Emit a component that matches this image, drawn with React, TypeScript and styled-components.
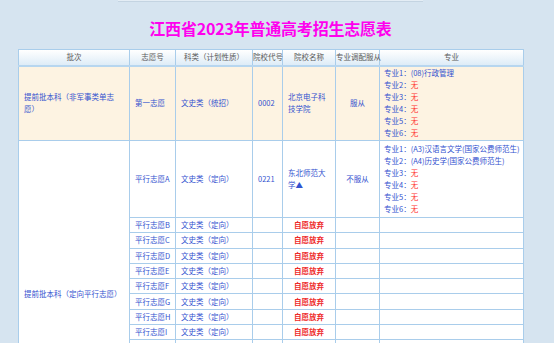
import React from 'react'
import styled, { createGlobalStyle } from 'styled-components'

const Global = createGlobalStyle`
  html, body {
    margin: 0;
    padding: 0;
    background: #d6e4f0;
    font-family: "Noto Sans CJK SC", "Noto Sans", sans-serif;
  }
`

const Page = styled.div`
  padding-left: 18px;
  width: 505px;
`

const TopStrip = styled.div`
  margin-left: 118px;
  width: 305px;
  height: 1px;
  background: #e4edf5;
  border-bottom: 1px solid #c4d4e2;
`

const Title = styled.h1`
  margin: 0;
  height: 47px;
  line-height: 52px;
  text-align: center;
  font-size: 16px;
  font-weight: 700;
  color: #ff00ee;
  letter-spacing: -0.2px;
`

const Table = styled.table`
  width: 505px;
  border-collapse: collapse;
  table-layout: fixed;
  border: 1px solid #9fc4e2;
  font-size: 7.5px;
  line-height: 12px;
`

const HeadRow = styled.tr`
  height: 16px;
  background: linear-gradient(#ffffff, #dcebf7);
`

const HeadCell = styled.th`
  padding: 0;
  font-weight: 400;
  color: #5a5a5a;
  white-space: nowrap;
  overflow: visible;
  border: 1px solid #a9cdeb;
  border-bottom: 2px solid #b7d6ef;
`

const Row = styled.tr<{ $bg?: string; $h: number }>`
  height: ${p => p.$h}px;
  background: ${p => p.$bg ?? '#ffffff'};
`

const Cell = styled.td<{ $align?: 'left' | 'center'; $wrap?: boolean }>`
  padding: 0 5px;
  border: 1px solid #a9cdeb;
  color: #3352cf;
  text-align: ${p => p.$align ?? 'left'};
  vertical-align: middle;
  white-space: ${p => (p.$wrap ? 'normal' : 'nowrap')};
  overflow: hidden;
`

const MajorCell = styled(Cell)`
  padding-left: 4px;
`

const Line = styled.div`
  white-space: nowrap;
`

const None = styled.span`
  color: #ff3030;
`

const Quit = styled.span`
  color: #ee2a2a;
  font-weight: 700;
`

const widths = [111, 46, 77, 30, 53, 44, 144]
const heads = ['批次', '志愿号', '科类（计划性质）', '院校代号', '院校名称', '专业调配服从', '专业']

function Majors({ items }: { items: (string | null)[] }) {
  return (
    <>
      {items.map((m, i) => (
        <Line key={i}>
          专业{i + 1}：{m ? m : <None>无</None>}
        </Line>
      ))}
    </>
  )
}

// school names wrap after five characters in the original form
function School({ name }: { name: string }) {
  return (
    <>
      <Line>{name.slice(0, 5)}</Line>
      <Line>{name.slice(5)}</Line>
    </>
  )
}

const letters = 'BCDEFGHIJKLMNOP'.split('')

export default function App() {
  return (
    <>
      <Global />
      <TopStrip />
      <Page>
        <Title>江西省2023年普通高考招生志愿表</Title>
        <Table>
          <colgroup>
            {widths.map((w, i) => <col key={i} style={{ width: w }} />)}
          </colgroup>
          <thead>
            <HeadRow>
              {heads.map(h => <HeadCell key={h}>{h}</HeadCell>)}
            </HeadRow>
          </thead>
          <tbody>
            <Row $bg="#fdf3e2" $h={75}>
              <Cell $wrap>提前批本科（非军事类单志愿）</Cell>
              <Cell>第一志愿</Cell>
              <Cell>文史类（统招）</Cell>
              <Cell>0002</Cell>
              <Cell><School name="北京电子科技学院" /></Cell>
              <Cell $align="center">服从</Cell>
              <MajorCell>
                <Majors items={['(08)行政管理', null, null, null, null, null]} />
              </MajorCell>
            </Row>
            <Row $h={77}>
              <Cell $wrap rowSpan={letters.length + 1}>提前批本科（定向平行志愿）</Cell>
              <Cell>平行志愿A</Cell>
              <Cell>文史类（定向）</Cell>
              <Cell>0221</Cell>
              <Cell><School name="东北师范大学▲" /></Cell>
              <Cell $align="center">不服从</Cell>
              <MajorCell>
                <Majors items={['(A3)汉语言文学(国家公费师范生)', '(A4)历史学(国家公费师范生)', null, null, null, null]} />
              </MajorCell>
            </Row>
            {letters.map(l => (
              <Row key={l} $h={15.3}>
                <Cell>平行志愿{l}</Cell>
                <Cell>文史类（定向）</Cell>
                <Cell />
                <Cell $align="center"><Quit>自愿放弃</Quit></Cell>
                <Cell />
                <Cell />
              </Row>
            ))}
          </tbody>
        </Table>
      </Page>
    </>
  )
}
